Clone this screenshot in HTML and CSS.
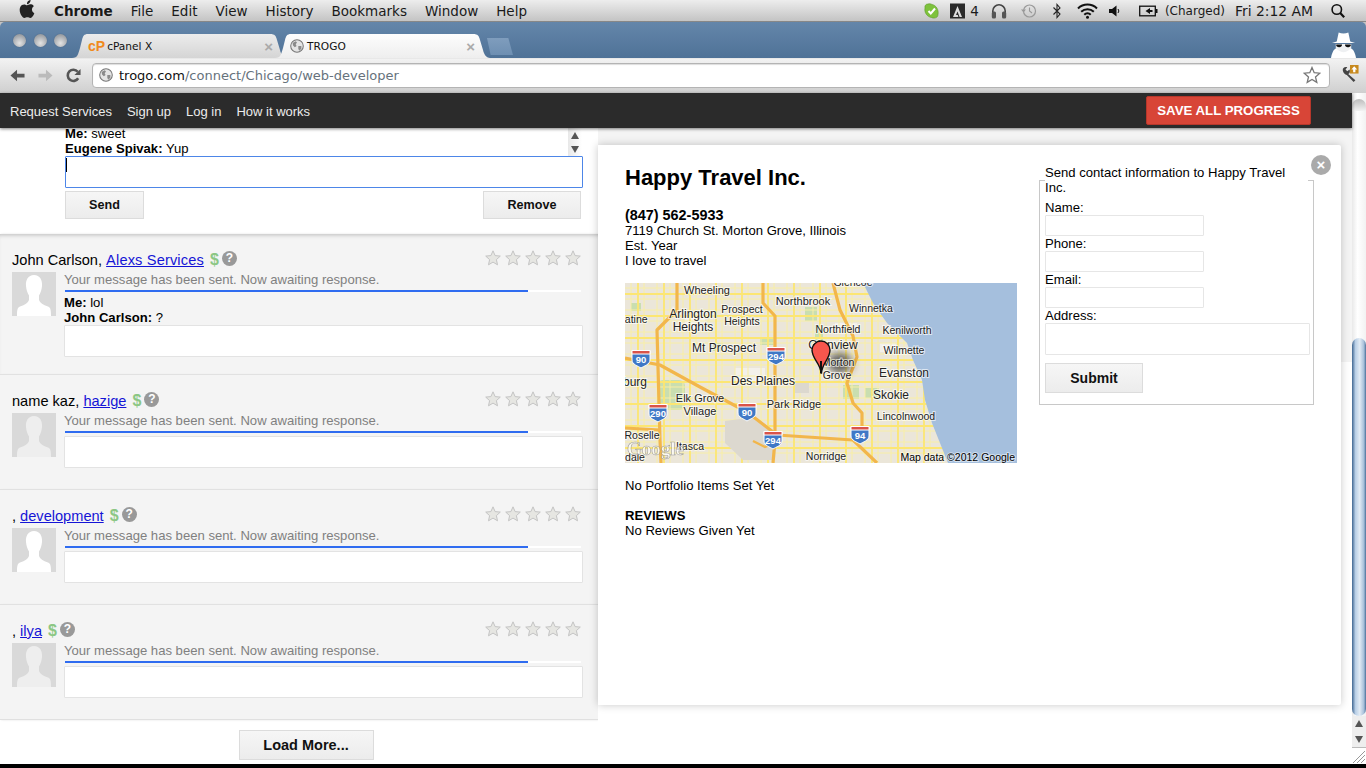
FILE: index.html
```html
<!DOCTYPE html>
<html lang="en">
<head>
<meta charset="utf-8">
<title>TROGO</title>
<link rel="stylesheet" href="styles.css">
</head>
<body>
<svg class="defs" width="0" height="0" aria-hidden="true">
  <symbol id="globe" viewBox="0 0 16 16">
    <circle cx="8" cy="8" r="7.2" fill="#e4e4e4" stroke="#777" stroke-width="1.2"/>
    <path d="M3 4.5 L6.5 2.5 L8 4 L6.5 6 L7.5 8 L5.5 9.5 L3.5 7.5Z M9.5 8 L13 8 L13 11 L10.5 13.5 L9.5 11Z" fill="#8a8a8a"/>
  </symbol>
  <symbol id="star" viewBox="0 0 16 16">
    <path d="M8 .8 L10.1 5.6 L15.3 6.1 L11.4 9.6 L12.5 14.8 L8 12.1 L3.5 14.8 L4.6 9.6 L.7 6.1 L5.9 5.6Z" fill="#e6e6e2" stroke="#c4c4c4" stroke-width="1"/>
  </symbol>
  <symbol id="person" viewBox="0 0 44 44">
    <path d="M22 3 C28 3 30.500 8 30 14 C29.700 18 28.500 21 27 23.500 L27 28 C28 31 31 33 36 34.500 C38.500 35.500 39 37.500 39 44 L5 44 C5 37.500 5.500 35.500 8 34.500 C13 33 16 31 17 28 L17 23.500 C15.500 21 14.300 18 14 14 C13.500 8 16 3 22 3Z"/>
  </symbol>
  <symbol id="shield" viewBox="0 0 20 20">
    <path d="M1 1.500 L19 1.500 L19 11 C19 15.500 13 17 10 19 C7 17 1 15.500 1 11Z" fill="#3f78c6" stroke="#fff" stroke-width="1"/>
    <path d="M1 1.500 L19 1.500 L19 5 L1 5Z" fill="#d9534a" stroke="#fff" stroke-width="1"/>
  </symbol>
  <pattern id="streets" width="26" height="22" patternUnits="userSpaceOnUse">
    <path d="M6 0V22 M19 0V22 M0 5H26 M0 16H26" stroke="#f8eea6" stroke-width="1" fill="none"/>
    <path d="M13 0V22 M0 11H26" stroke="#fce672" stroke-width="1.800" fill="none"/>
  </pattern>
  <filter id="soft" x="-60%" y="-60%" width="220%" height="220%"><feGaussianBlur stdDeviation="4"/></filter>
</svg>

<header class="menubar">
  <svg class="apple" viewBox="0 0 24 24"><path d="M12.152 6.896c-.948 0-2.415-1.078-3.960-1.040-2.040.027-3.910 1.183-4.961 3.014-2.117 3.675-.546 9.103 1.519 12.090 1.013 1.454 2.208 3.090 3.792 3.039 1.520-.065 2.090-.987 3.935-.987 1.831 0 2.350.987 3.960.948 1.637-.026 2.676-1.480 3.676-2.948 1.156-1.688 1.636-3.325 1.662-3.415-.039-.013-3.182-1.221-3.220-4.857-.026-3.040 2.480-4.494 2.597-4.559-1.429-2.090-3.623-2.324-4.390-2.376-2-.156-3.675 1.090-4.610 1.090zM15.530 3.830c.843-1.012 1.400-2.427 1.245-3.830-1.207.052-2.662.805-3.532 1.818-.780.896-1.454 2.338-1.273 3.714 1.338.104 2.715-.688 3.559-1.701"/></svg>
  <nav class="appmenu">
    <span class="appname">Chrome</span><span>File</span><span>Edit</span><span>View</span><span>History</span><span>Bookmarks</span><span>Window</span><span>Help</span>
  </nav>
  <div class="tray">
    <svg class="ti t15" viewBox="0 0 15 16"><path d="M4 1 C1.500 1 .5 3 1 5 C0 9 3 14 7.500 14.500 C9 15.500 14 15.500 14 11.500 C15 7 12 2 8 1.500 C6.500 .5 5 .8 4 1Z" fill="#7ec23c" stroke="#5d9a28" stroke-width=".6"/><path d="M4.500 8 L6.800 10.500 L11 5.500" fill="none" stroke="#fff" stroke-width="2"/></svg>
    <svg class="ti t15 g11" viewBox="0 0 15 16"><rect width="15" height="15" y=".5" fill="#2a2a2a"/><path d="M7.500 3 L12 14 L9.600 14 L7.500 8.500 L6 12 L7.800 12 L8.400 14 L3 14Z" fill="#ddd"/></svg>
    <span class="traytext g5">4</span>
    <svg class="ti t16 g12" viewBox="0 0 16 16"><path d="M1.800 10 V8 A6.200 6.200 0 0 1 14.200 8 V10" fill="none" stroke="#444" stroke-width="1.600"/><rect x=".8" y="8.500" width="4.200" height="7" rx="1.500" fill="#555"/><rect x="11" y="8.500" width="4.200" height="7" rx="1.500" fill="#555"/></svg>
    <svg class="ti t16 g14" viewBox="0 0 16 16"><circle cx="8.500" cy="8" r="6" fill="none" stroke="#999" stroke-width="1.200"/><path d="M8.500 4.500 V8 L11 10" fill="none" stroke="#999" stroke-width="1.100"/><path d="M0 6.500 L5 6.500 L2.500 9.500Z" fill="#999"/></svg>
    <svg class="ti t8 g16" viewBox="0 0 8 16"><path d="M.5 4.500 L7 11 L4 14.500 L4 1.500 L7 5 L.5 11.500" fill="none" stroke="#222" stroke-width="1.100"/></svg>
    <svg class="ti t21 g16" viewBox="0 0 21 16"><path d="M1 5.500 A13.500 13.500 0 0 1 20 5.500" fill="none" stroke="#111" stroke-width="2"/><path d="M4.200 8.700 A9 9 0 0 1 16.800 8.700" fill="none" stroke="#111" stroke-width="2"/><path d="M7.300 11.700 A4.500 4.500 0 0 1 13.700 11.700" fill="none" stroke="#111" stroke-width="2"/><circle cx="10.500" cy="14.300" r="1.500" fill="#111"/></svg>
    <svg class="ti t11 g11" viewBox="0 0 11 16"><path d="M0 6 H3 L7.500 2.500 V13.500 L3 10 H0Z" fill="#111"/><path d="M9 6 A3 3 0 0 1 9 10" fill="none" stroke="#111"/></svg>
    <svg class="ti t19 g19" viewBox="0 0 19 16"><rect x=".7" y="3.200" width="15.600" height="9.600" fill="none" stroke="#111" stroke-width="1.300"/><rect x="16.500" y="6" width="2" height="4" fill="#111"/><path d="M3.500 8 H6.500 L11 5 V7 H13.500 V9 H11 V11 L6.500 8Z" fill="#111"/></svg>
    <span class="traytext small g7">(Charged)</span>
    <span class="traytext clock g10">Fri 2:12 AM</span>
    <svg class="ti t14 g18" viewBox="0 0 14 16"><circle cx="5.800" cy="6.500" r="4.700" fill="none" stroke="#111" stroke-width="1.600"/><path d="M9.200 10 L13.200 14.200" stroke="#111" stroke-width="2.200"/></svg>
  </div>
</header>

<div class="tabstrip">
  <div class="lights"><i></i><i></i><i></i></div>
  <div class="tabs">
    <div class="tab back"><b class="cp">cP</b><span>cPanel X</span><em>×</em></div>
    <div class="tab front"><svg class="favicon"><use href="#globe"/></svg><span>TROGO</span><em>×</em></div>
    <div class="newtab"></div>
  </div>
  <svg class="incognito" viewBox="0 0 28 28">
    <path d="M7 11 L9 1.500 C12 3 16 3 19 1.500 L21 11 L26 12.500 L2 12.500Z" fill="#fff"/>
    <path d="M1 28 C2 22 4 18.500 7 17.500 L21 17.500 C24 18.500 26 22 27 28Z" fill="#fff"/>
    <path d="M6 13.500 H22 V18 C19 21 16 22 14 22 C12 22 9 21 6 18Z" fill="#eef0f2"/>
    <path d="M6.500 14 H12.500 C12.500 17 9 18 6.500 15.500Z M15.500 14 H21.500 V15.500 C19 18 15.500 17 15.500 14Z" fill="#111"/>
  </svg>
</div>

<div class="toolbar">
  <svg class="navbtn" viewBox="0 0 16 16"><path d="M.5 8 L7.500 1.800 V6 H15.500 V10 H7.500 V14.200Z" fill="#555"/></svg>
  <svg class="navbtn gap13" viewBox="0 0 16 16"><path d="M15.500 8 L8.500 1.800 V6 H.5 V10 H8.500 V14.200Z" fill="#bbb"/></svg>
  <svg class="navbtn gap13" viewBox="0 0 16 16"><path d="M13 11 A6 6 0 1 1 12.500 4" fill="none" stroke="#555" stroke-width="2.800"/><path d="M15.500 1 V7.500 H9Z" fill="#555"/></svg>
  <div class="omnibox">
    <svg class="favicon"><use href="#globe"/></svg>
    <span class="url"><span class="host">trogo.com</span>/connect/Chicago/web-developer</span>
    <svg class="bookmark" viewBox="0 0 18 18"><path d="M9 1.500 L11.200 6.700 L16.800 7.200 L12.500 10.900 L13.800 16.400 L9 13.500 L4.200 16.400 L5.500 10.900 L1.200 7.200 L6.800 6.700Z" fill="#fff" stroke="#777" stroke-width="1.300"/></svg>
  </div>
  <svg class="wrench" viewBox="0 0 20 20">
    <path d="M2 6 C1.500 3.500 4 1.500 7 2.500 L5 5 L7 7 L9.500 5 C10.500 7.500 9.500 9.500 8 10 L16 17 L14 19 L6.500 11 C4.500 11 2.500 8.500 2 6Z" fill="#444"/>
    <rect x="10" y="0" width="9.500" height="9.500" fill="#c88a1e"/>
    <path d="M14.700 1.500 L18 5 H16 V8 H13.500 V5 H11.500Z" fill="#fff"/>
  </svg>
</div>

<div class="viewport">
  <div class="content">
    <nav class="sitenav">
      <a>Request Services</a><a>Sign up</a><a>Log in</a><a>How it works</a>
      <button class="save">SAVE ALL PROGRESS</button>
    </nav>
    <main class="main">
      <section class="leftcol">
        <div class="current">
          <div class="chatbox">
            <div class="chatlines">
              <p><b>Me:</b> sweet</p>
              <p><b>Eugene Spivak:</b> Yup</p>
            </div>
            <div class="miniscroll"><i class="up"></i><i class="down"></i></div>
          </div>
          <div class="focused"><textarea class="reply focus" aria-label="Reply"></textarea><span class="caret"></span></div>
          <div class="actions"><button class="btn send">Send</button><button class="btn remove">Remove</button></div>
        </div>

        <article class="row short">
          <div class="rowhead">
            <div class="who">John Carlson, <a href="#">Alexs Services</a> <span class="dollar">$</span><span class="help">?</span></div>
            <div class="stars"><svg><use href="#star"/></svg><svg><use href="#star"/></svg><svg><use href="#star"/></svg><svg><use href="#star"/></svg><svg><use href="#star"/></svg></div>
          </div>
          <div class="rowbody">
            <svg class="avatar white"><use href="#person"/></svg>
            <div class="rowmain">
              <p class="status">Your message has been sent. Now awaiting response.</p>
              <div class="progress"><div class="fill"></div></div>
              <div class="log"><p><b>Me:</b> lol</p><p><b>John Carlson:</b> ?</p></div>
              <textarea class="reply" aria-label="Reply"></textarea>
            </div>
          </div>
        </article>

        <article class="row">
          <div class="rowhead">
            <div class="who">name kaz, <a href="#">hazige</a> <span class="dollar">$</span><span class="help">?</span></div>
            <div class="stars"><svg><use href="#star"/></svg><svg><use href="#star"/></svg><svg><use href="#star"/></svg><svg><use href="#star"/></svg><svg><use href="#star"/></svg></div>
          </div>
          <div class="rowbody">
            <svg class="avatar pale"><use href="#person"/></svg>
            <div class="rowmain">
              <p class="status">Your message has been sent. Now awaiting response.</p>
              <div class="progress"><div class="fill"></div></div>
              <textarea class="reply" aria-label="Reply"></textarea>
            </div>
          </div>
        </article>

        <article class="row">
          <div class="rowhead">
            <div class="who">, <a href="#">development</a> <span class="dollar">$</span><span class="help">?</span></div>
            <div class="stars"><svg><use href="#star"/></svg><svg><use href="#star"/></svg><svg><use href="#star"/></svg><svg><use href="#star"/></svg><svg><use href="#star"/></svg></div>
          </div>
          <div class="rowbody">
            <svg class="avatar white"><use href="#person"/></svg>
            <div class="rowmain">
              <p class="status">Your message has been sent. Now awaiting response.</p>
              <div class="progress"><div class="fill"></div></div>
              <textarea class="reply" aria-label="Reply"></textarea>
            </div>
          </div>
        </article>

        <article class="row">
          <div class="rowhead">
            <div class="who">, <a href="#">ilya</a> <span class="dollar">$</span><span class="help">?</span></div>
            <div class="stars"><svg><use href="#star"/></svg><svg><use href="#star"/></svg><svg><use href="#star"/></svg><svg><use href="#star"/></svg><svg><use href="#star"/></svg></div>
          </div>
          <div class="rowbody">
            <svg class="avatar pale"><use href="#person"/></svg>
            <div class="rowmain">
              <p class="status">Your message has been sent. Now awaiting response.</p>
              <div class="progress"><div class="fill"></div></div>
              <textarea class="reply" aria-label="Reply"></textarea>
            </div>
          </div>
        </article>

        <div class="loadwrap"><button class="btn load">Load More...</button></div>
      </section>

      <section class="rightcol">
        <div class="modal">
          <button class="close" aria-label="Close">×</button>
          <div class="profile">
            <h1>Happy Travel Inc.</h1>
            <p class="phone">(847) 562-5933</p>
            <p>7119 Church St. Morton Grove, Illinois</p>
            <p>Est. Year</p>
            <p>I love to travel</p>
            <svg class="map" viewBox="0 0 392 180">
              <rect width="392" height="180" fill="#ebe6d9"/>
              <g fill="#f3f0ea"><rect x="255" y="60" width="16" height="9"/><rect x="210" y="40" width="22" height="8"/><rect x="60" y="30" width="20" height="16"/><rect x="110" y="85" width="30" height="14"/></g>
              <g fill="#c9deb0">
                <rect x="32" y="97" width="28" height="30" rx="6"/><rect x="135" y="54" width="14" height="8"/><rect x="180" y="24" width="12" height="14"/><rect x="190" y="42" width="8" height="22"/><rect x="218" y="102" width="16" height="14"/><rect x="88" y="60" width="10" height="8"/><rect x="240" y="105" width="14" height="10"/><rect x="6" y="20" width="10" height="8"/>
              </g>
              <rect width="392" height="180" fill="url(#streets)"/>
              <g fill="#dcd8cf"><path d="M100 138 L130 134 L152 150 L150 177 L118 177 L100 160Z"/><rect x="170" y="100" width="14" height="10"/></g>
              <path d="M238 0 L248 20 L262 40 L282 60 L288 77 L297 97 L300 117 L307 140 L315 160 L323 180 L392 180 L392 0Z" fill="#a5bfdd"/>
              <g fill="none" stroke="#f2b64b" stroke-width="3.200" stroke-linejoin="round">
                <path d="M138 0 L138 20 L150 33 L150 74 L150 157 L148 180"/>
                <path d="M0 75 L35 82 L75 104 L122 129 L152 152 L228 157 L252 180"/>
                <path d="M52 0 L52 27 L32 47 L35 157 L36 180"/>
                <path d="M208 0 L215 27 L228 53 L232 74 L222 100 L228 120 L237 130 L237 154"/>
                <path d="M0 145 L35 147"/>
                <path d="M128 158 L140 164 L150 160" stroke-width="2.400"/>
              </g>
              <g class="shieldset">
                <use href="#shield" x="6" y="66" width="20" height="20"/><use href="#shield" x="141" y="63" width="20" height="20"/><use href="#shield" x="23" y="120" width="20" height="20"/><use href="#shield" x="112" y="119" width="20" height="20"/><use href="#shield" x="138" y="147" width="20" height="20"/><use href="#shield" x="225" y="142" width="20" height="20"/>
              </g>
              <g class="shieldtext">
                <text x="16" y="80">90</text><text x="151" y="77">294</text><text x="33" y="134">290</text><text x="122" y="133">90</text><text x="148" y="161">294</text><text x="235" y="156">94</text>
              </g>
              <g class="maplabel">
                <text x="82" y="11" class="mid">Wheeling</text><text x="178" y="22" class="mid">Northbrook</text><text x="246" y="29">Winnetka</text><text x="228" y="3">Glencoe</text>
                <text x="117" y="30">Prospect</text><text x="117" y="42">Heights</text>
                <text x="68" y="35" class="big">Arlington</text><text x="68" y="48" class="big">Heights</text><text x="10" y="40">latine</text>
                <text x="213" y="50">Northfield</text><text x="282" y="51">Kenilworth</text><text x="208" y="66" class="big">Glenview</text>
                <text x="99" y="69" class="big">Mt Prospect</text><text x="279" y="71">Wilmette</text><text x="279" y="94" class="big">Evanston</text>
                <text x="138" y="102" class="big">Des Plaines</text><text x="10" y="103" class="big">burg</text>
                <text x="75" y="119" class="mid">Elk Grove</text><text x="75" y="132" class="mid">Village</text><text x="169" y="125" class="mid">Park Ridge</text>
                <text x="266" y="116" class="big">Skokie</text><text x="281" y="137">Lincolnwood</text><text x="17" y="156">Roselle</text>
                <text x="65" y="167">Itasca</text><text x="10" y="178">dale</text><text x="201" y="177">Norridge</text>
              </g>
              <ellipse cx="215" cy="80" rx="12" ry="10" fill="#333" opacity=".75" filter="url(#soft)"/>
              <g class="maplabel"><text x="213" y="83">Morton</text><text x="212" y="96">Grove</text></g>
              <path d="M196 90 C195.500 80 187 76 187 67 A9 9 0 0 1 205 67 C205 76 197 80 196.500 90Z" fill="#f8564d" stroke="#111" stroke-width="1.400"/>
              <path d="M196 78 V90" stroke="#111" stroke-width="2"/>
              <text class="glogo" x="2" y="172">Google</text>
              <text class="mapcopy" x="390" y="178">Map data ©2012 Google</text>
            </svg>
            <p class="portfolio">No Portfolio Items Set Yet</p>
            <p class="reviews"><b>REVIEWS</b></p>
            <p>No Reviews Given Yet</p>
          </div>
          <fieldset class="contact">
            <legend>Send contact information to Happy Travel Inc.</legend>
            <label class="first">Name:<input type="text"></label>
            <label>Phone:<input type="text"></label>
            <label>Email:<input type="text"></label>
            <label>Address:<textarea class="address"></textarea></label>
            <button class="btn submit">Submit</button>
          </fieldset>
        </div>
      </section>
    </main>
  </div>
  <aside class="scrollbar">
    <div class="sb-track"><span class="sb-cap"></span></div>
    <div class="sb-thumb"></div>
    <div class="sb-arrows"><i class="up"></i><i class="down"></i></div>
    <div class="sb-corner"><svg viewBox="0 0 16 16"><path d="M3 15 L15 3 M7 15 L15 7 M11 15 L15 11" stroke="#999" stroke-width="1"/></svg></div>
  </aside>
</div>
<div class="dock"></div>
</body>
</html>
```

FILE: styles.css
```css
* { box-sizing: border-box; }
html, body { margin: 0; padding: 0; }
body { width: 1366px; height: 768px; overflow: hidden; font-family: "Liberation Sans", Arial, sans-serif; font-size: 13.1px; line-height: 15px; color: #000; background: #000; display: flex; flex-direction: column; }
p { margin: 0; }
.defs { position: absolute; }

/* mac menu bar */
.menubar { height: 22px; flex: none; display: flex; align-items: center; padding-left: 18px; background: linear-gradient(#ededed, #c4c4c4 95%, #555 100%); font-family: "DejaVu Sans", sans-serif; font-size: 13.5px; color: #1a1a1a; }
.apple { width: 18px; height: 18px; fill: #222; margin-top: -4px; }
.appmenu { display: flex; gap: 18px; margin-left: 18px; }
.appname { font-weight: 700; }
.tray { margin-left: auto; padding-right: 21px; display: flex; align-items: center; }
.ti { height: 16px; flex: none; }
.t8 { width: 8px; } .t11 { width: 11px; } .t14 { width: 14px; } .t15 { width: 15px; } .t16 { width: 16px; } .t19 { width: 19px; } .t21 { width: 21px; }
.traytext { white-space: nowrap; }
.small { font-size: 12px; }
.clock { font-size: 13.900px; }
.g5 { margin-left: 5px; } .g7 { margin-left: 7px; } .g10 { margin-left: 10px; } .g11 { margin-left: 11px; } .g12 { margin-left: 12px; } .g14 { margin-left: 14px; } .g16 { margin-left: 16px; } .g18 { margin-left: 18px; } .g19 { margin-left: 19px; }

/* browser tab strip */
.tabstrip { height: 36px; flex: none; display: flex; background: #c4c4c4; position: relative; }
.tabstrip::before { content: ""; position: absolute; inset: 0; border-radius: 5px 5px 0 0; background: linear-gradient(#6486aa, #4f7297); }
.lights { position: relative; display: flex; gap: 7.500px; padding: 12px 0 0 13px; }
.lights i { width: 13px; height: 13px; border-radius: 50%; background: radial-gradient(circle at 50% 70%, #e4e4e4, #8f949a 85%); box-shadow: 0 0 1px #3c5470; }
.tabs { position: relative; display: flex; align-items: flex-end; margin-left: 5px; }
.tab { width: 215px; height: 24px; display: flex; align-items: center; font-family: "DejaVu Sans", sans-serif; font-size: 10.600px; color: #111; clip-path: path("M0 24 C6 24 6 20 8 14 L10 6 C11 2 12 0 16 0 L198 0 C203 0 204 2 205 6 L208 16 C209 21 212 24 215 24 Z"); }
.tab em { margin-left: auto; font-style: normal; font-family: "Liberation Sans", sans-serif; font-weight: 700; font-size: 15px; color: #aaa; }
.back { background: linear-gradient(#ececec, #d5d5d5); padding: 0 14px 0 16px; }
.front { background: linear-gradient(#fdfdfd, #eeeeee); margin-left: -12px; padding: 0 15px 0 15px; }
.cp { font-family: "Liberation Sans", sans-serif; font-weight: 700; font-size: 14px; color: #f08a1d; margin-right: 2px; }
.favicon { width: 14px; height: 14px; flex: none; margin-right: 3px; }
.newtab { width: 26px; height: 17px; margin: 0 0 3px -3px; background: linear-gradient(#7f9dbd, #6e8fb2); clip-path: polygon(0 0, 82% 0, 100% 100%, 14% 100%); }
.incognito { position: absolute; left: 1330px; top: 9px; width: 27px; height: 27px; }

/* browser toolbar */
.toolbar { height: 35px; flex: none; display: flex; align-items: center; padding: 0 0 2px 10px; background: linear-gradient(#f2f2f2, #cfcfcf); border-top: 1px solid #e8e8e8; }
.navbtn { width: 15px; height: 15px; flex: none; }
.gap13 { margin-left: 13px; }
.omnibox { width: 1238px; height: 25px; margin-left: 11px; display: flex; align-items: center; padding: 0 4px 0 6px; background: #fff; border: 1px solid #b4b4b4; border-radius: 4px; box-shadow: inset 0 1px 1px #ddd; }
.omnibox .favicon { margin-right: 6px; }
.url { font-family: "DejaVu Sans", sans-serif; font-size: 13px; color: #66727c; white-space: nowrap; }
.host { color: #111; }
.bookmark { width: 18px; height: 18px; margin-left: auto; margin-right: 4px; }
.wrench { width: 18px; height: 18px; margin-left: 11px; margin-top: -2px; }

/* page */
.viewport { height: 671px; flex: none; display: flex; background: #fff; }
.content { flex: 1; min-width: 0; display: flex; flex-direction: column; }
.sitenav { height: 35px; flex: none; display: flex; align-items: center; gap: 15px; padding: 0 41px 0 10px; background: #2b2b2b; box-shadow: 0 1px 3px rgba(0,0,0,.5); position: relative; z-index: 2; font-size: 13px; color: #ececec; }
.sitenav a { margin-top: 2px; }
.save { margin-left: auto; height: 29px; width: 165px; padding: 0; font: 700 13.250px "Liberation Sans", sans-serif; color: #fff; background: #d84537; border: 1px solid #b6372b; border-radius: 2px; }
.main { flex: 1; min-height: 0; display: flex; overflow: hidden; }
.leftcol { width: 598px; flex: none; background: #fff; }
.current { height: 106px; padding-left: 65px; background: #fff; }
.chatbox { height: 28px; position: relative; display: flex; flex-direction: column; justify-content: flex-end; }
.chatlines p { white-space: nowrap; }
.miniscroll { position: absolute; left: 503px; top: 0; width: 14px; height: 28px; background: linear-gradient(90deg, #e8e8e8, #fff); display: flex; flex-direction: column; justify-content: space-around; align-items: center; }
.up, .down { display: block; width: 0; height: 0; border-left: 4px solid transparent; border-right: 4px solid transparent; }
.up { border-bottom: 7px solid #555; }
.down { border-top: 7px solid #555; }
.focused { position: relative; height: 32px; }
.reply { display: block; width: 519px; height: 32px; resize: none; background: #fff; border: 1px solid #e3e3e3; border-radius: 1px; padding: 0; margin: 0; outline: none; }
.focus { width: 518px; border-color: #4d86e8; }
.caret { position: absolute; left: 1px; top: 2px; width: 1px; height: 14px; background: #000; }
.actions { display: flex; justify-content: space-between; width: 516px; margin-top: 3px; }
.btn { height: 28px; padding: 0; font: 700 12.600px "Liberation Sans", sans-serif; color: #111; background: linear-gradient(#f6f6f6, #ececec); border: 1px solid #dcdcdc; }
.send { width: 79px; }
.remove { width: 98px; }

.row { padding: 15px 17px 21px 12px; background: #f4f4f4; border-bottom: 1px solid #e0e0e0; box-shadow: 1px 0 2px #e4e4e4; }
.row.short { padding-bottom: 17px; box-shadow: inset 0 4px 4px -3px #bbb, 1px 0 2px #e4e4e4; }
.short a { letter-spacing: .15px; }
.rowhead { height: 20px; display: flex; justify-content: space-between; align-items: center; margin-bottom: 3px; }
.who { font-size: 14.600px; line-height: 20px; display: flex; align-items: center; white-space: pre; margin-top: 2px; }
.who a { color: #1414d6; text-decoration: underline; }
.dollar { font-weight: 700; font-size: 16px; color: #8cc784; margin-left: 6px; }
.help { width: 15px; height: 15px; margin: -3px 0 0 3px; border-radius: 50%; background: #999; color: #fff; font: 700 12px/15px "Liberation Sans", sans-serif; text-align: center; }
.stars { display: flex; gap: 4px; margin-top: -3px; }
.stars svg { width: 16px; height: 16px; }
.rowbody { display: flex; gap: 8px; }
.avatar { width: 44px; height: 44px; flex: none; background: #d9d9d9; }
.white { fill: #fff; }
.pale { fill: #eeeeee; }
.rowmain { flex: 1; min-width: 0; }
.status { color: #808080; line-height: 16px; white-space: nowrap; }
.progress { height: 2px; width: 516px; margin: 2px 0 3px 1px; background: #fff; }
.fill { height: 2px; width: 463px; background: #2f6cf0; }
.log { height: 30px; }
.loadwrap { display: flex; justify-content: center; padding: 10px 0 0 14px; }
.load { width: 135px; height: 30px; font-size: 14.500px; }

.rightcol { flex: 1; min-width: 0; background: linear-gradient(#f4f4f4 234px, #fff 234px); padding-top: 17px; }
.modal { position: relative; width: 743px; height: 560px; display: flex; gap: 22px; padding: 0 27px; background: #fff; box-shadow: 0 0 8px rgba(0,0,0,.22); border-radius: 0 2px 2px 0; }
.profile { width: 392px; flex: none; }
h1 { margin: 20px 0 0; font-size: 22px; line-height: 26px; font-weight: 700; }
.phone { margin-top: 17px; font-weight: 700; font-size: 14.400px; }
.map { display: block; width: 392px; height: 180px; margin-top: 15px; }
.portfolio { margin-top: 15px; }
.reviews { margin-top: 15px; }
.maplabel text { font: 10.500px "Liberation Sans", sans-serif; fill: #222; text-anchor: middle; stroke: #fff; stroke-width: 2px; stroke-opacity: .65; paint-order: stroke; }
.maplabel text.mid { font-size: 11px; }
.maplabel text.big { font-size: 12px; }
.shieldtext text { font: 700 9.500px "Liberation Sans", sans-serif; fill: #fff; text-anchor: middle; }
.glogo { font: 700 19px "Liberation Serif", serif; fill: #fff; stroke: #888; stroke-width: .6px; opacity: .75; }
.mapcopy { font: 10.500px "Liberation Sans", sans-serif; fill: #000; text-anchor: end; stroke: #fff; stroke-width: 2px; stroke-opacity: .5; paint-order: stroke; }
.contact { width: 275px; height: 240px; margin: 20px 0 0 0; padding: 0 5px; border: 1px solid #c8c8c8; min-width: 0; flex: none; }
.contact legend { padding: 0; width: 263px; }
.contact label { display: block; }
.contact label.first { margin-top: 5px; }
.contact input { display: block; width: 159px; height: 21px; padding: 0; background: #fff; border: 1px solid #e6e6e6; border-radius: 1px; }
.address { display: block; width: 265px; height: 32px; resize: none; padding: 0; background: #fff; border: 1px solid #e6e6e6; border-radius: 1px; }
.submit { display: block; width: 98px; height: 30px; margin-top: 8px; font-size: 14px; }
.close { position: absolute; right: 10px; top: 10px; width: 20px; height: 20px; padding: 0; border: 0; border-radius: 50%; background: #aaa; color: #fff; font: 700 15px/20px "Liberation Sans", sans-serif; }

/* aqua scrollbar */
.scrollbar { width: 14px; flex: none; display: flex; flex-direction: column; background: linear-gradient(90deg, #e9e9e9, #fff 40%, #f2f2f2); }
.sb-track { height: 245px; flex: none; padding-top: 6px; }
.sb-cap { display: block; height: 12px; border-radius: 7px 7px 0 0; background: linear-gradient(#bdbdbd, #f3f3f3); }
.sb-thumb { height: 378px; flex: none; border-radius: 7px; background: linear-gradient(90deg, #3f6691, #b9cfe6 25%, #e2ebf4 55%, #a6bfd9 85%, #4a6f98); }
.sb-arrows { height: 32px; flex: none; display: flex; flex-direction: column; justify-content: space-around; align-items: center; background: #eee; border-bottom: 1px solid #bbb; }
.sb-corner { height: 16px; flex: none; background: #fff; }
.sb-corner svg { display: block; width: 16px; height: 16px; margin-left: -2px; }
.dock { flex: 1; background: #000; }
```
